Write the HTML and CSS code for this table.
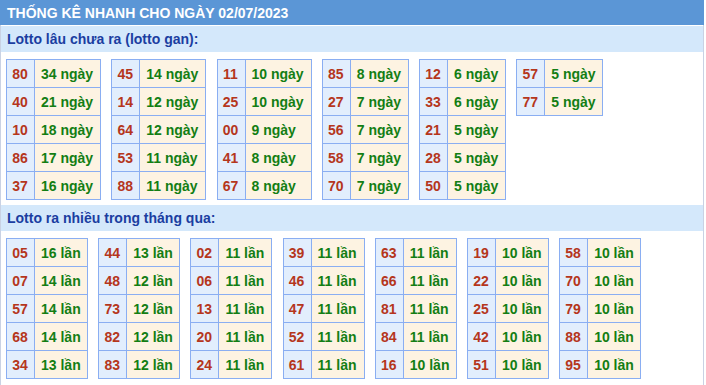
FILE: index.html
```html
<!DOCTYPE html>
<html lang="vi">
<head>
<meta charset="utf-8">
<title>Thống kê nhanh</title>
<link rel="stylesheet" href="styles.css">
</head>
<body>
<div class="box">
  <div class="title">THỐNG KÊ NHANH CHO NGÀY 02/07/2023</div>

  <div class="band">Lotto lâu chưa ra (lotto gan):</div>
  <div class="tables">
    <div class="stat wide">
      <div class="num">80</div><div class="cnt">34 ngày</div>
      <div class="num">40</div><div class="cnt">21 ngày</div>
      <div class="num">10</div><div class="cnt">18 ngày</div>
      <div class="num">86</div><div class="cnt">17 ngày</div>
      <div class="num">37</div><div class="cnt">16 ngày</div>
    </div>
    <div class="stat wide">
      <div class="num">45</div><div class="cnt">14 ngày</div>
      <div class="num">14</div><div class="cnt">12 ngày</div>
      <div class="num">64</div><div class="cnt">12 ngày</div>
      <div class="num">53</div><div class="cnt">11 ngày</div>
      <div class="num">88</div><div class="cnt">11 ngày</div>
    </div>
    <div class="stat wide">
      <div class="num">11</div><div class="cnt">10 ngày</div>
      <div class="num">25</div><div class="cnt">10 ngày</div>
      <div class="num">00</div><div class="cnt">9 ngày</div>
      <div class="num">41</div><div class="cnt">8 ngày</div>
      <div class="num">67</div><div class="cnt">8 ngày</div>
    </div>
    <div class="stat mid">
      <div class="num">85</div><div class="cnt">8 ngày</div>
      <div class="num">27</div><div class="cnt">7 ngày</div>
      <div class="num">56</div><div class="cnt">7 ngày</div>
      <div class="num">58</div><div class="cnt">7 ngày</div>
      <div class="num">70</div><div class="cnt">7 ngày</div>
    </div>
    <div class="stat mid">
      <div class="num">12</div><div class="cnt">6 ngày</div>
      <div class="num">33</div><div class="cnt">6 ngày</div>
      <div class="num">21</div><div class="cnt">5 ngày</div>
      <div class="num">28</div><div class="cnt">5 ngày</div>
      <div class="num">50</div><div class="cnt">5 ngày</div>
    </div>
    <div class="stat mid">
      <div class="num">57</div><div class="cnt">5 ngày</div>
      <div class="num">77</div><div class="cnt">5 ngày</div>
    </div>
  </div>

  <div class="band">Lotto ra nhiều trong tháng qua:</div>
  <div class="tables tight">
    <div class="stat lan">
      <div class="num">05</div><div class="cnt">16 lần</div>
      <div class="num">07</div><div class="cnt">14 lần</div>
      <div class="num">57</div><div class="cnt">14 lần</div>
      <div class="num">68</div><div class="cnt">14 lần</div>
      <div class="num">34</div><div class="cnt">13 lần</div>
    </div>
    <div class="stat lan">
      <div class="num">44</div><div class="cnt">13 lần</div>
      <div class="num">48</div><div class="cnt">12 lần</div>
      <div class="num">73</div><div class="cnt">12 lần</div>
      <div class="num">82</div><div class="cnt">12 lần</div>
      <div class="num">83</div><div class="cnt">12 lần</div>
    </div>
    <div class="stat lan">
      <div class="num">02</div><div class="cnt">11 lần</div>
      <div class="num">06</div><div class="cnt">11 lần</div>
      <div class="num">13</div><div class="cnt">11 lần</div>
      <div class="num">20</div><div class="cnt">11 lần</div>
      <div class="num">24</div><div class="cnt">11 lần</div>
    </div>
    <div class="stat lan">
      <div class="num">39</div><div class="cnt">11 lần</div>
      <div class="num">46</div><div class="cnt">11 lần</div>
      <div class="num">47</div><div class="cnt">11 lần</div>
      <div class="num">52</div><div class="cnt">11 lần</div>
      <div class="num">61</div><div class="cnt">11 lần</div>
    </div>
    <div class="stat lan">
      <div class="num">63</div><div class="cnt">11 lần</div>
      <div class="num">66</div><div class="cnt">11 lần</div>
      <div class="num">81</div><div class="cnt">11 lần</div>
      <div class="num">84</div><div class="cnt">11 lần</div>
      <div class="num">16</div><div class="cnt">10 lần</div>
    </div>
    <div class="stat lan">
      <div class="num">19</div><div class="cnt">10 lần</div>
      <div class="num">22</div><div class="cnt">10 lần</div>
      <div class="num">25</div><div class="cnt">10 lần</div>
      <div class="num">42</div><div class="cnt">10 lần</div>
      <div class="num">51</div><div class="cnt">10 lần</div>
    </div>
    <div class="stat lan">
      <div class="num">58</div><div class="cnt">10 lần</div>
      <div class="num">70</div><div class="cnt">10 lần</div>
      <div class="num">79</div><div class="cnt">10 lần</div>
      <div class="num">88</div><div class="cnt">10 lần</div>
      <div class="num">95</div><div class="cnt">10 lần</div>
    </div>
  </div>
</div>
</body>
</html>
```

FILE: styles.css
```css
html, body {
  margin: 0;
  padding: 0;
  background: #ffffff;
}

body {
  font-family: "Liberation Sans", Arial, sans-serif;
  font-size: 14px;
  font-weight: bold;
}

.box {
  width: 702px;
  min-height: 385px;
  border-left: 1px solid #c9d2e4;
  border-right: 1px solid #c9d2e4;
}

.title {
  height: 25px;
  line-height: 27px;
  margin: 0 -1px 1px -1px;
  padding-left: 7px;
  background: #5b96d6;
  color: #ffffff;
}

.band {
  height: 26px;
  line-height: 26px;
  padding-left: 6px;
  background: #d4e8fb;
  color: #1b3ea1;
}

.tables {
  display: flex;
  align-items: flex-start;
  gap: 10.25px;
  padding: 7px 5px 5px 5px;
}

.tables.tight {
  gap: 10.2px;
}

.stat {
  display: grid;
  grid-auto-rows: 28px;
  border-top: 1px solid #8aaef2;
  border-left: 1px solid #8aaef2;
}

.stat.wide {
  grid-template-columns: 28px 66px;
}

.stat.mid {
  grid-template-columns: 28px 58px;
}

.stat.lan {
  grid-template-columns: 28px 53px;
}

.num,
.cnt {
  box-sizing: border-box;
  border-right: 1px solid #8aaef2;
  border-bottom: 1px solid #8aaef2;
  line-height: 28px;
  white-space: nowrap;
}

.num {
  background: #e2eefd;
  color: #b5361c;
  text-align: center;
  padding-right: 1px;
}

.cnt {
  background: #fdf3e2;
  color: #137e14;
  padding-left: 6px;
}
```
